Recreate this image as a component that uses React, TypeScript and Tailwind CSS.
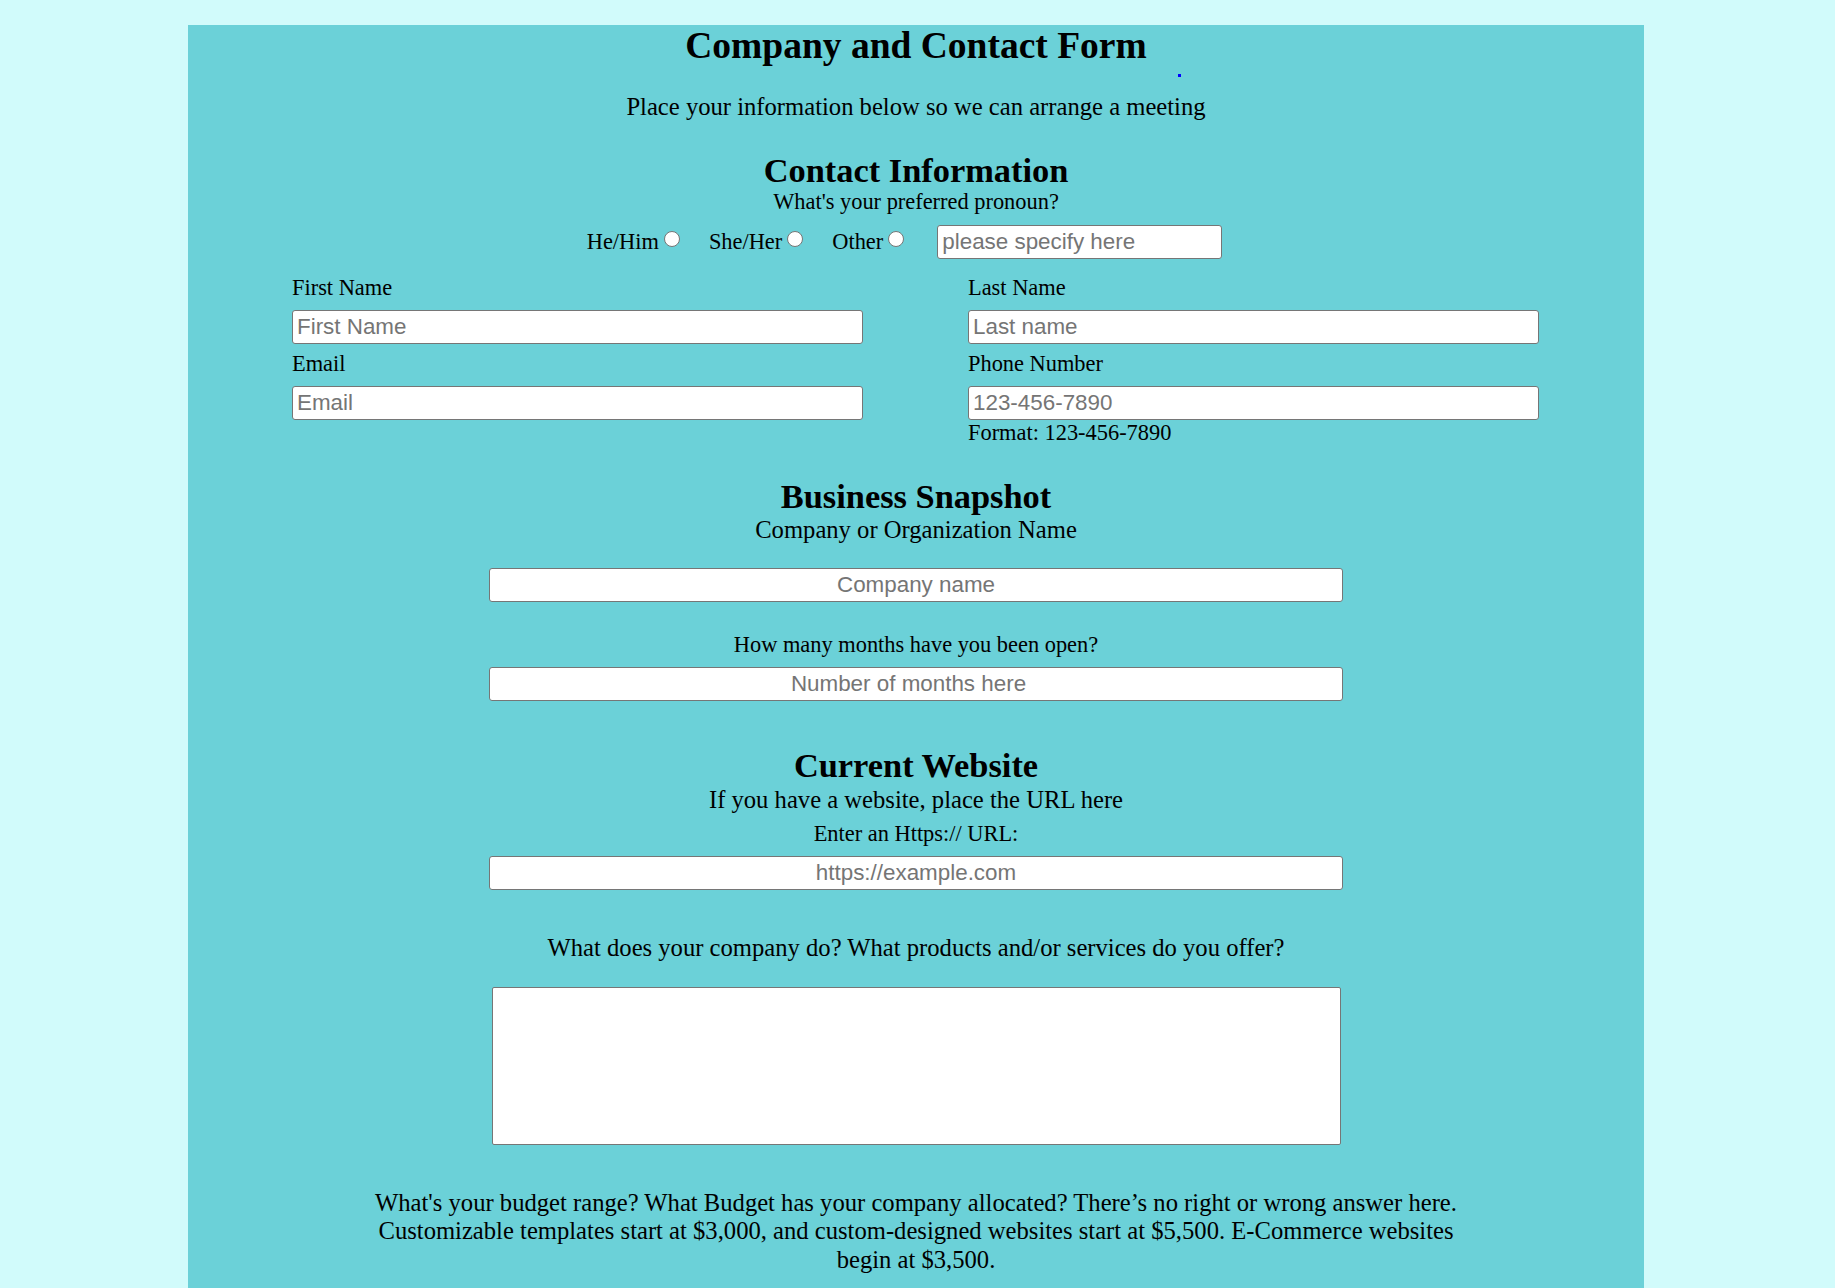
// Company and Contact Form — a single static intake page: contact details,
// business snapshot, current website and budget prompt.

const inputCls =
  "h-[34px] rounded-[3px] border border-[#767676] bg-white px-[4px] font-['Liberation_Sans',Arial,sans-serif] text-[22.4px] text-black placeholder:text-[#757575] outline-none";

function Field({ label, placeholder, type = 'text', note }: { label: string; placeholder: string; type?: string; note?: string }) {
  return (
    <div>
      <label className="block text-[22.4px] leading-[26px]">{label}</label>
      <input type={type} placeholder={placeholder} className={`${inputCls} mt-[9px] block w-[571px]`} />
      {note && <p className="text-[22.4px] leading-[26px]">{note}</p>}
    </div>
  );
}

function Pronoun({ label, first }: { label: string; first?: boolean }) {
  return (
    <label className={`flex items-center ${first ? '' : 'ml-[29px]'}`}>
      {label}
      <input
        type="radio"
        name="pronoun"
        className="mb-[6px] ml-[5px] h-[16px] w-[16px] appearance-none rounded-full border-[1.5px] border-[#767676] bg-white checked:border-[5px] checked:border-[#1a73e8]"
      />
    </label>
  );
}

export default function App() {
  return (
    <div className="min-h-screen bg-[#d1fbfb] pt-[25px] font-['Liberation_Serif','Times_New_Roman',serif] text-black">
      <form className="ml-[188px] w-[1456px] bg-[#6bd1d8] pb-[60px] text-center">
        <h1 className="text-[37.5px] font-bold leading-[42px]">Company and Contact Form</h1>
        {/* stray empty link in the original header */}
        <div className="h-[26px] pt-[7px] pl-[990px]">
          <a href="#" className="block h-[3px] w-[3px] bg-[#0000ff]" />
        </div>
        <p className="text-[24.64px] leading-[28px]">Place your information below so we can arrange a meeting</p>

        {/* Contact information */}
        <h2 className="mt-[30px] text-[34.4px] font-bold leading-[38px]">Contact Information</h2>
        <p className="text-[22.4px] leading-[26px]">What's your preferred pronoun?</p>
        <div className="mt-[10px] flex h-[34px] items-center justify-center pr-[23px] text-[22.4px] leading-[26px]">
          <Pronoun label="He/Him" first />
          <Pronoun label="She/Her" />
          <Pronoun label="Other" />
          <input type="text" placeholder="please specify here" className={`${inputCls} ml-[33px] w-[285px]`} />
        </div>

        <div className="mt-[16px] flex pl-[104px] text-left">
          <div className="flex w-[676px] flex-col gap-[7px]">
            <Field label="First Name" placeholder="First Name" />
            <Field label="Email" placeholder="Email" type="email" />
          </div>
          <div className="flex w-[676px] flex-col gap-[7px]">
            <Field label="Last Name" placeholder="Last name" />
            <Field label="Phone Number" placeholder="123-456-7890" type="tel" note="Format: 123-456-7890" />
          </div>
        </div>

        {/* Business snapshot */}
        <h2 className="mt-[31px] text-[34.4px] font-bold leading-[38px]">Business Snapshot</h2>
        <p className="mt-[1px] text-[24.64px] leading-[28px]">Company or Organization Name</p>
        <input type="text" placeholder="Company name" className={`${inputCls} mx-auto mt-[24px] block w-[854px] text-center`} />
        <p className="mt-[30px] text-[22.4px] leading-[26px]">How many months have you been open?</p>
        <input type="number" placeholder="Number of months here" className={`${inputCls} mx-auto mt-[9px] block w-[854px] text-center`} />

        {/* Current website */}
        <h2 className="mt-[45px] text-[34.4px] font-bold leading-[38px]">Current Website</h2>
        <p className="mt-[2px] text-[24.64px] leading-[28px]">If you have a website, place the URL here</p>
        <p className="mt-[7px] text-[22.4px] leading-[26px]">Enter an Https:// URL:</p>
        <input type="url" placeholder="https://example.com" className={`${inputCls} mx-auto mt-[9px] block w-[854px] text-center`} />

        <p className="mt-[44px] text-[24.64px] leading-[28px]">What does your company do? What products and/or services do you offer?</p>
        <textarea className="mx-auto mt-[25px] block h-[158px] w-[849px] resize-none rounded-[2px] border border-[#767676] bg-white" />

        <p className="mx-auto mt-[44px] w-[1110px] text-[24.64px] leading-[28.3px]">
          What's your budget range? What Budget has your company allocated? There’s no right or wrong answer here.
          Customizable templates start at $3,000, and custom-designed websites start at $5,500. E-Commerce websites
          begin at $3,500.
        </p>
      </form>
    </div>
  );
}
